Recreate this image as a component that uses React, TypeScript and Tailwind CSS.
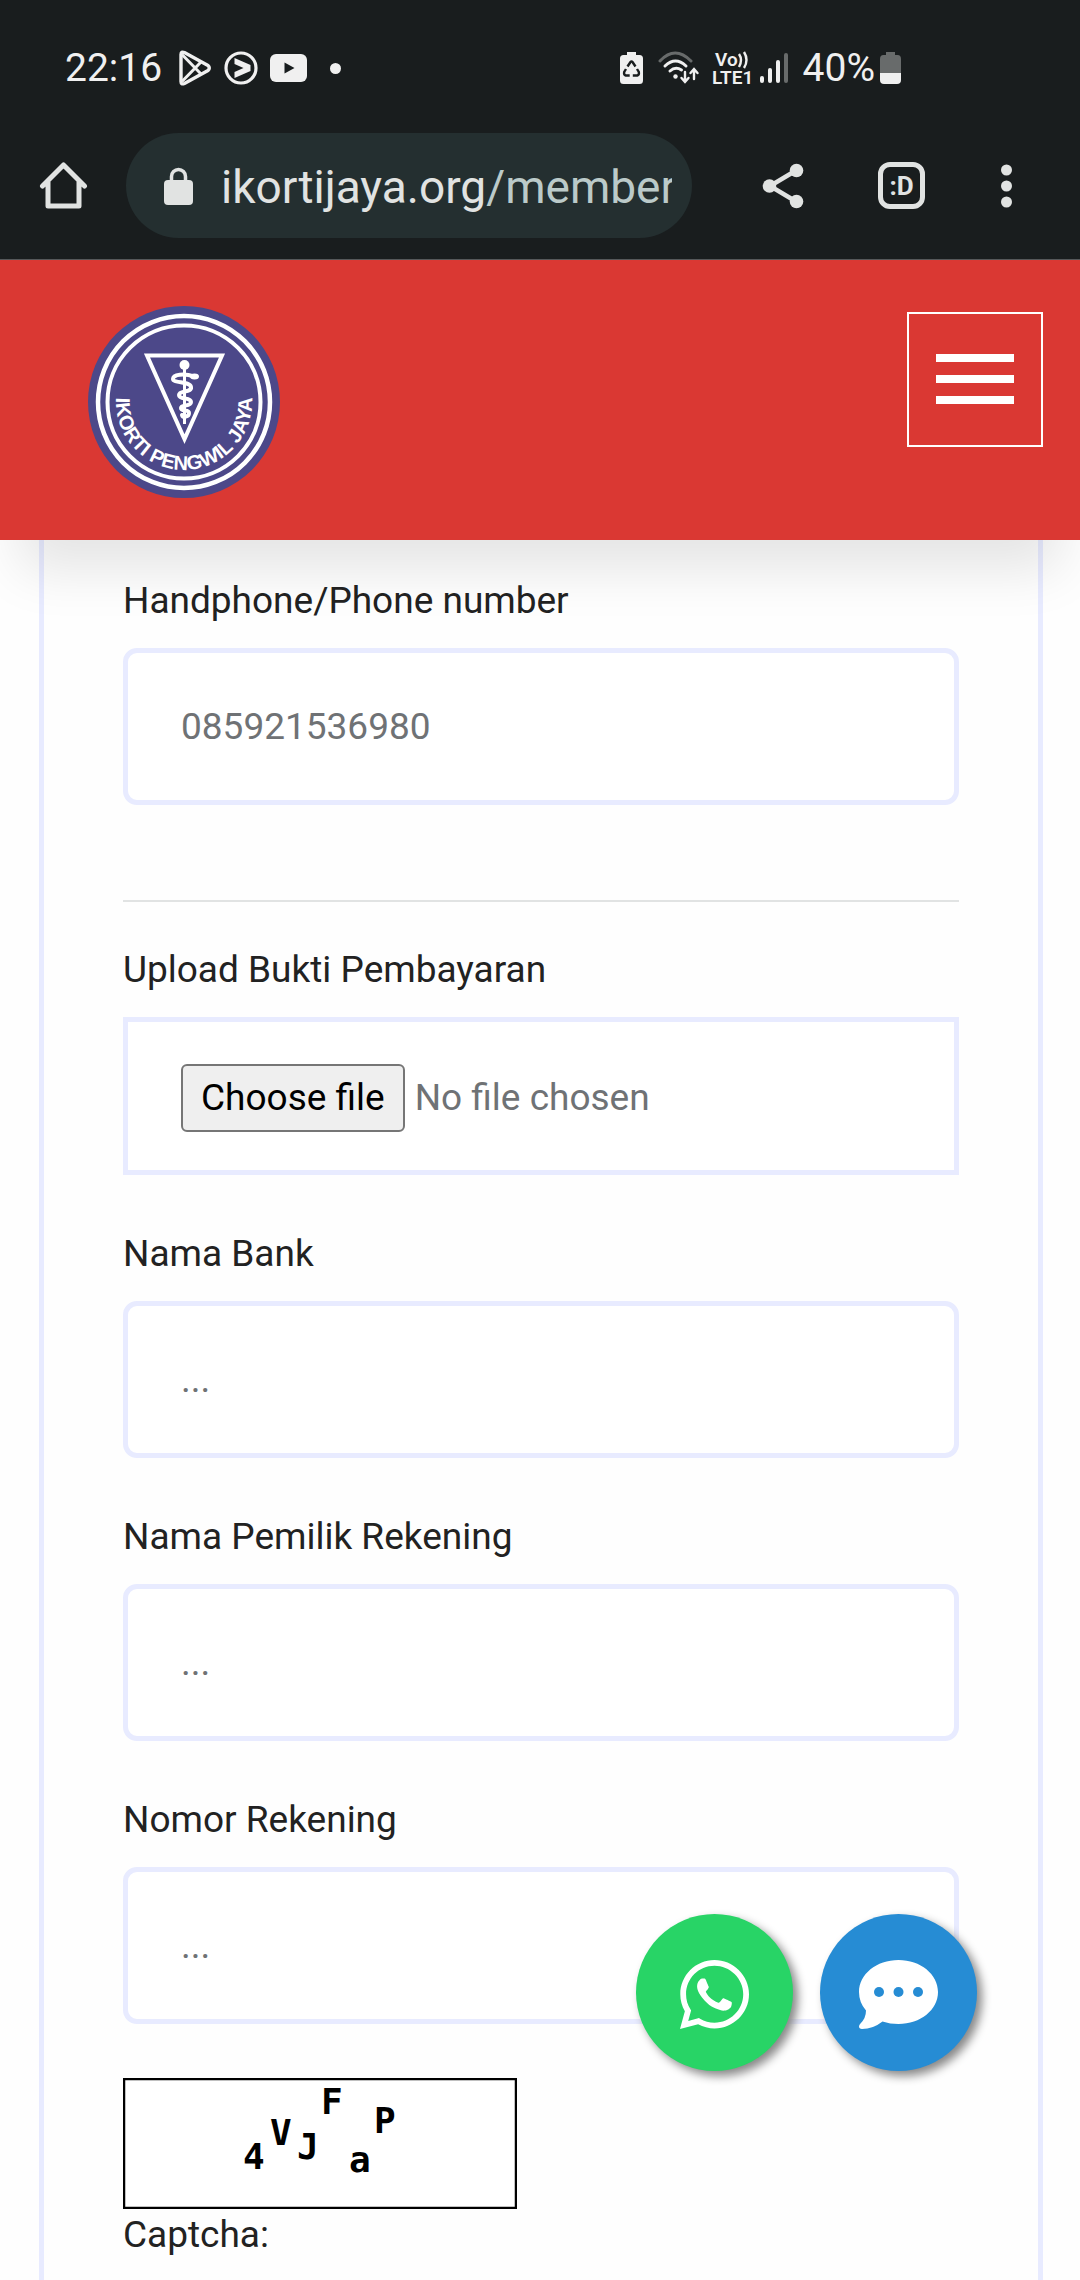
import { useState, type ReactNode } from "react";

const inputClass =
  "block h-[157px] w-full rounded-[14px] border-5 border-[#e8ebff] bg-white px-[53px] text-[37px] text-[#222] outline-none placeholder:text-[#6f7275] placeholder:opacity-100 focus:border-[#c9d0ff]";

function StatusBar() {
  return (
    <div className="flex h-[133px] items-start justify-between pl-[65px] pr-[179px] pt-[46px] text-[39px] leading-[44px] text-[#f0f0f0]">
      <div className="flex items-center">
        <span className="w-[113px]">22:16</span>
        <svg width="34" height="36" viewBox="0 0 34 36" fill="none" stroke="currentColor" strokeWidth="3.4" strokeLinejoin="round">
          <path d="M3 4.500v27q0 3.400 3.400 2L30 20.400q2.600-2.400 0-4.800L6.400 2.500Q3 1.100 3 4.500z" />
          <path d="M4 4.500l19.500 20M4 31.500l19.500-20" strokeWidth="3" />
        </svg>
        <svg className="ml-[12px]" width="34" height="34" viewBox="0 0 34 34" fill="none" stroke="currentColor">
          <circle cx="17" cy="17" r="15" strokeWidth="3.200" />
          <path d="M10.500 7l16 7v6l-16 7v-6l9-4-9-4z" fill="currentColor" stroke="none" />
        </svg>
        <svg className="ml-[12px]" width="37" height="28" viewBox="0 0 37 28">
          <rect width="37" height="28" rx="6" fill="currentColor" />
          <path d="M14.500 8.500v11l10-5.500z" fill="#191d1e" />
        </svg>
        <span className="ml-[23px] size-[11px] rounded-full bg-[#f0f0f0]" />
      </div>
      <div className="flex items-center">
        <svg width="23" height="34" viewBox="0 0 23 34">
          <path d="M7 1h9v3h3.500q3.500 0 3.500 3.500v22q0 3.500-3.500 3.500h-16Q0 33 0 29.500v-22Q0 4 3.500 4H7z" fill="currentColor" />
          <g fill="none" stroke="#191d1e" strokeWidth="2.400">
            <path d="M7.500 15.500l3-4.500q1-1.300 2 0l3 4.500" />
            <path d="M17 18l1.800 3q.6 3-1.500 3.500h-4.500" />
            <path d="M6 18l-1.800 3q-.6 3 1.500 3.500h4" />
          </g>
        </svg>
        <svg className="ml-[15px]" width="42" height="34" viewBox="0 0 42 34" fill="none" stroke="currentColor" strokeWidth="3" strokeLinecap="round">
          <path d="M2 10q15-16 31 0" stroke="#686b6b" />
          <path d="M7 15q10.500-10 21 0M12 20q5.500-5 11.500-1" />
          <circle cx="17.500" cy="25.500" r="2.200" fill="currentColor" stroke="none" />
          <path d="M27 21v9M23.500 27l3.500 4 3.500-4M36 28v-9M32.500 22l3.500-4 3.500 4" strokeWidth="2.400" />
        </svg>
        <svg className="ml-[12px] overflow-visible" width="40" height="34" viewBox="0 0 40 34" fill="currentColor">
          <text x="3" y="15" fontSize="19" fontWeight="600">Vo</text>
          <path d="M27 3q4 6 0 13M32 1q5 8 0 16" fill="none" stroke="currentColor" strokeWidth="2.400" />
          <text x="0" y="33" fontSize="19" fontWeight="600">LTE1</text>
        </svg>
        <svg className="ml-[8px]" width="28" height="32" viewBox="0 0 28 32" fill="currentColor">
          <rect y="24" width="4" height="7" rx="2" />
          <rect x="8" y="16" width="4" height="15" rx="2" />
          <rect x="16" y="8" width="4" height="23" rx="2" />
          <rect x="24" y="1" width="4" height="30" rx="2" fill="#686b6b" />
        </svg>
        <span className="ml-[15px]">40%</span>
        <svg className="ml-[5px]" width="21" height="34" viewBox="0 0 21 34">
          <path d="M6 1h9v3h2.500Q21 4 21 8v14H0V8q0-4 3.500-4H6z" fill="#686b6b" />
          <path d="M0 22h21v7q0 4-4 4H4q-4 0-4-4z" fill="currentColor" />
        </svg>
      </div>
    </div>
  );
}

function BrowserBar() {
  return (
    <div className="flex h-[105px] items-center pl-[38px] pr-[64px] text-[#e1e3e2]">
      <button type="button" aria-label="Home">
        <svg width="50" height="50" viewBox="0 0 50 50" fill="none" stroke="currentColor" strokeWidth="5" strokeLinecap="round" strokeLinejoin="round">
          <path d="M4.500 25L25.500 4 46.500 25M10 21v24h31V21" />
        </svg>
      </button>
      <div className="ml-[38px] flex h-full min-w-0 flex-1 items-center rounded-full bg-[#242f30] pl-[38px] pr-[20px]">
        <svg className="shrink-0" width="29" height="38" viewBox="0 0 29 38">
          <rect y="13" width="29" height="25" rx="4" fill="currentColor" />
          <path d="M7.500 14V9.500a7 7 0 0 1 14 0V14" fill="none" stroke="currentColor" strokeWidth="3.500" />
        </svg>
        <span className="ml-[28px] min-w-0 overflow-hidden whitespace-nowrap pt-[2px] text-[46px] leading-[60px]">
          ikortijaya.org<span className="text-[#bbcac9]">/member</span>
        </span>
      </div>
      <button type="button" aria-label="Share" className="ml-[70px]">
        <svg width="42" height="46" viewBox="0 0 42 46" fill="currentColor">
          <path d="M34 7.500L8 23l26 15.500" fill="none" stroke="currentColor" strokeWidth="4.500" />
          <circle cx="34.500" cy="7.500" r="6.800" />
          <circle cx="7.500" cy="23" r="6.800" />
          <circle cx="34.500" cy="38.500" r="6.800" />
        </svg>
      </button>
      <button type="button" aria-label="Tabs" className="ml-[74px] flex size-[47px] items-center justify-center rounded-[12px] border-5 border-current text-[26px] leading-[26px] font-bold">
        :D
      </button>
      <button type="button" aria-label="More" className="ml-[72px]">
        <svg width="19" height="46" viewBox="0 0 19 46" fill="currentColor">
          <circle cx="9.500" cy="7" r="5.500" />
          <circle cx="9.500" cy="23" r="5.500" />
          <circle cx="9.500" cy="39" r="5.500" />
        </svg>
      </button>
    </div>
  );
}

function Logo() {
  return (
    <svg width="192" height="192" viewBox="0 0 192 192" role="img" aria-label="IKORTI Pengwil Jaya">
      <defs>
        <path id="logo-arc" d="M30.300 78.400A68 68 0 1 0 161.700 78.400" />
      </defs>
      <circle cx="96" cy="96" r="96" fill="#4c4889" />
      <g fill="none" stroke="#fff">
        <circle cx="96" cy="96" r="86" strokeWidth="4.500" />
        <circle cx="96" cy="96" r="76.500" strokeWidth="4" />
        <path d="M59 49.500h75L96.500 133z" strokeWidth="4" />
        <path d="M96.500 60v58" strokeWidth="3" />
        <path
          d="M106 70.500C96 67 85 68.500 85 73S102 75 103 81 91 84 91 89s12 2 12 7-10 2-10 6 8 1 8 5-6 5-7 2"
          strokeWidth="4"
          strokeLinecap="round"
        />
      </g>
      <circle cx="96.500" cy="59" r="5" fill="#fff" />
      <ellipse cx="106.500" cy="70.500" rx="4.500" ry="3" fill="#fff" />
      <text fill="#fff" fontSize="20" fontWeight="700" fontFamily="'Liberation Sans', Arial, sans-serif">
        <textPath href="#logo-arc" startOffset="50%" textAnchor="middle">IKORTI PENGWIL JAYA</textPath>
      </text>
    </svg>
  );
}

function SiteHeader() {
  return (
    <header className="relative z-10 flex h-[280px] items-start justify-between bg-[#da3833] pl-[88px] pr-[37px] shadow-[0_50px_50px_-20px_rgba(0,0,0,0.1)]">
      <a href="#home" className="mt-[46px]">
        <Logo />
      </a>
      <button type="button" aria-label="Menu" className="mt-[52px] flex h-[135px] w-[136px] flex-col items-center gap-[13px] border-2 border-white pt-[40px]">
        <span className="h-[8px] w-[78px] bg-white" />
        <span className="h-[8px] w-[78px] bg-white" />
        <span className="h-[8px] w-[78px] bg-white" />
      </button>
    </header>
  );
}

function Label({ id, children }: { id: string; children: ReactNode }) {
  return (
    <label htmlFor={id} className="mb-[19px] block text-[37px] leading-[57px]">
      {children}
    </label>
  );
}

function TextField({ id, label, placeholder }: { id: string; label: string; placeholder: string }) {
  return (
    <div>
      <Label id={id}>{label}</Label>
      <input id={id} type="text" placeholder={placeholder} className={inputClass} />
    </div>
  );
}

function FileField() {
  const [name, setName] = useState("No file chosen");
  return (
    <div>
      <Label id="proof">Upload Bukti Pembayaran</Label>
      <label className="flex h-[158px] items-center border-5 border-[#e8ebff] bg-white px-[53px] pt-1 text-[37px] leading-[44px] text-[#6f7275]">
        <input
          id="proof"
          type="file"
          className="sr-only"
          onChange={(e) => setName(e.target.files?.[0]?.name ?? "No file chosen")}
        />
        <span className="rounded-[6px] border-2 border-[#767676] bg-[#efefef] px-[18px] py-[10px] text-black">Choose file</span>
        <span className="ml-[10px]">{name}</span>
      </label>
    </div>
  );
}

function Captcha() {
  return (
    <div className="mt-1">
      <svg className="block" width="394" height="131" viewBox="0 0 394 131" role="img" aria-label="Captcha code">
        <rect x="1" y="1" width="392" height="129" fill="#fff" stroke="#000" strokeWidth="2.500" />
        <g fontFamily="'DejaVu Sans Mono', monospace" fontSize="36" fontWeight="700">
          <text x="120" y="91">4</text>
          <text x="147" y="67">V</text>
          <text x="174" y="81">J</text>
          <text x="198" y="36">F</text>
          <text x="226" y="94">a</text>
          <text x="251" y="55">P</text>
        </g>
      </svg>
      <p className="text-[37px] leading-[52px]">Captcha:</p>
    </div>
  );
}

function FloatingButtons() {
  return (
    <div className="fixed bottom-[209px] right-[103px] z-20 flex gap-[27px]">
      <a href="#whatsapp" aria-label="WhatsApp" className="flex size-[157px] items-center justify-center rounded-full bg-[#28d466] pt-[3px] shadow-[5px_5px_10px_#888]">
        <svg width="69" height="69" viewBox="0 32 448 448" fill="#fff">
          <path d="M380.900 97.100C339 55.100 283.200 32 223.900 32c-122.400 0-222 99.600-222 222 0 39.100 10.200 77.300 29.600 111L0 480l117.700-30.900c32.400 17.700 68.900 27 106.100 27h.1c122.300 0 224.100-99.600 224.100-222 0-59.300-25.200-115-67.100-157zm-157 341.600c-33.200 0-65.700-8.900-94-25.700l-6.700-4-69.800 18.300L72 359.200l-4.400-7c-18.500-29.400-28.200-63.300-28.200-98.200 0-101.700 82.800-184.500 184.600-184.500 49.300 0 95.600 19.200 130.400 54.100 34.800 34.900 56.200 81.200 56.100 130.500 0 101.800-84.900 184.600-186.600 184.600zm101.200-138.200c-5.500-2.800-32.800-16.200-37.900-18-5.100-1.900-8.800-2.800-12.500 2.800-3.700 5.600-14.300 18-17.600 21.800-3.200 3.700-6.500 4.200-12 1.400-32.600-16.300-54-29.100-75.500-66-5.700-9.800 5.700-9.100 16.300-30.300 1.800-3.700.9-6.900-.5-9.700-1.400-2.800-12.500-30.100-17.100-41.200-4.500-10.800-9.100-9.300-12.500-9.500-3.200-.2-6.900-.2-10.600-.2-3.700 0-9.700 1.400-14.800 6.900-5.100 5.600-19.400 19-19.400 46.300 0 27.300 19.900 53.700 22.600 57.400 2.800 3.700 39.100 59.700 94.800 83.800 35.200 15.200 49 16.500 66.600 13.900 10.700-1.600 32.800-13.400 37.400-26.400 4.600-13 4.600-24.100 3.200-26.400-1.300-2.500-5-3.900-10.500-6.600z" />
        </svg>
      </a>
      <a href="#chat" aria-label="Chat" className="flex size-[157px] items-center justify-center rounded-full bg-[#268cd4] pt-[3px] shadow-[5px_5px_10px_#888]">
        <svg width="79" height="69" viewBox="0 0 79 69">
          <path d="M39.500 0C61.500 0 79 14.300 79 32S61.500 64 39.500 64q-8.500 0-16-2.500Q14 69 3 69q-3-.2-3-2.500 0-1.500 1.500-3Q7 58 7 50.500 0 42.500 0 32C0 14.300 17.500 0 39.500 0z" fill="#fff" />
          <g fill="#268cd4">
            <circle cx="20" cy="32" r="5" />
            <circle cx="39.500" cy="32" r="5" />
            <circle cx="59" cy="32" r="5" />
          </g>
        </svg>
      </a>
    </div>
  );
}

export default function App() {
  return (
    <div className="flex h-screen flex-col overflow-hidden bg-[#fefefe] font-['Roboto',sans-serif] text-[#222]">
      <div className="shrink-0 border-b border-[#55585a] bg-[#191d1e] pb-[21px]">
        <StatusBar />
        <BrowserBar />
      </div>
      <div className="shrink-0">
        <SiteHeader />
      </div>
      <main className="ml-[39px] mr-[37px] flex-1 border-x-5 border-[#e8ebff] px-[79px] pt-[32px]">
        <form className="flex flex-col gap-[50px]">
          <TextField id="phone" label="Handphone/Phone number" placeholder="085921536980" />
          <hr className="mt-[45px] -mb-[11px] border-t-2 border-[#e1e3e3]" />
          <FileField />
          <TextField id="bank" label="Nama Bank" placeholder="..." />
          <TextField id="owner" label="Nama Pemilik Rekening" placeholder="..." />
          <TextField id="account" label="Nomor Rekening" placeholder="..." />
          <Captcha />
        </form>
      </main>
      <FloatingButtons />
    </div>
  );
}
